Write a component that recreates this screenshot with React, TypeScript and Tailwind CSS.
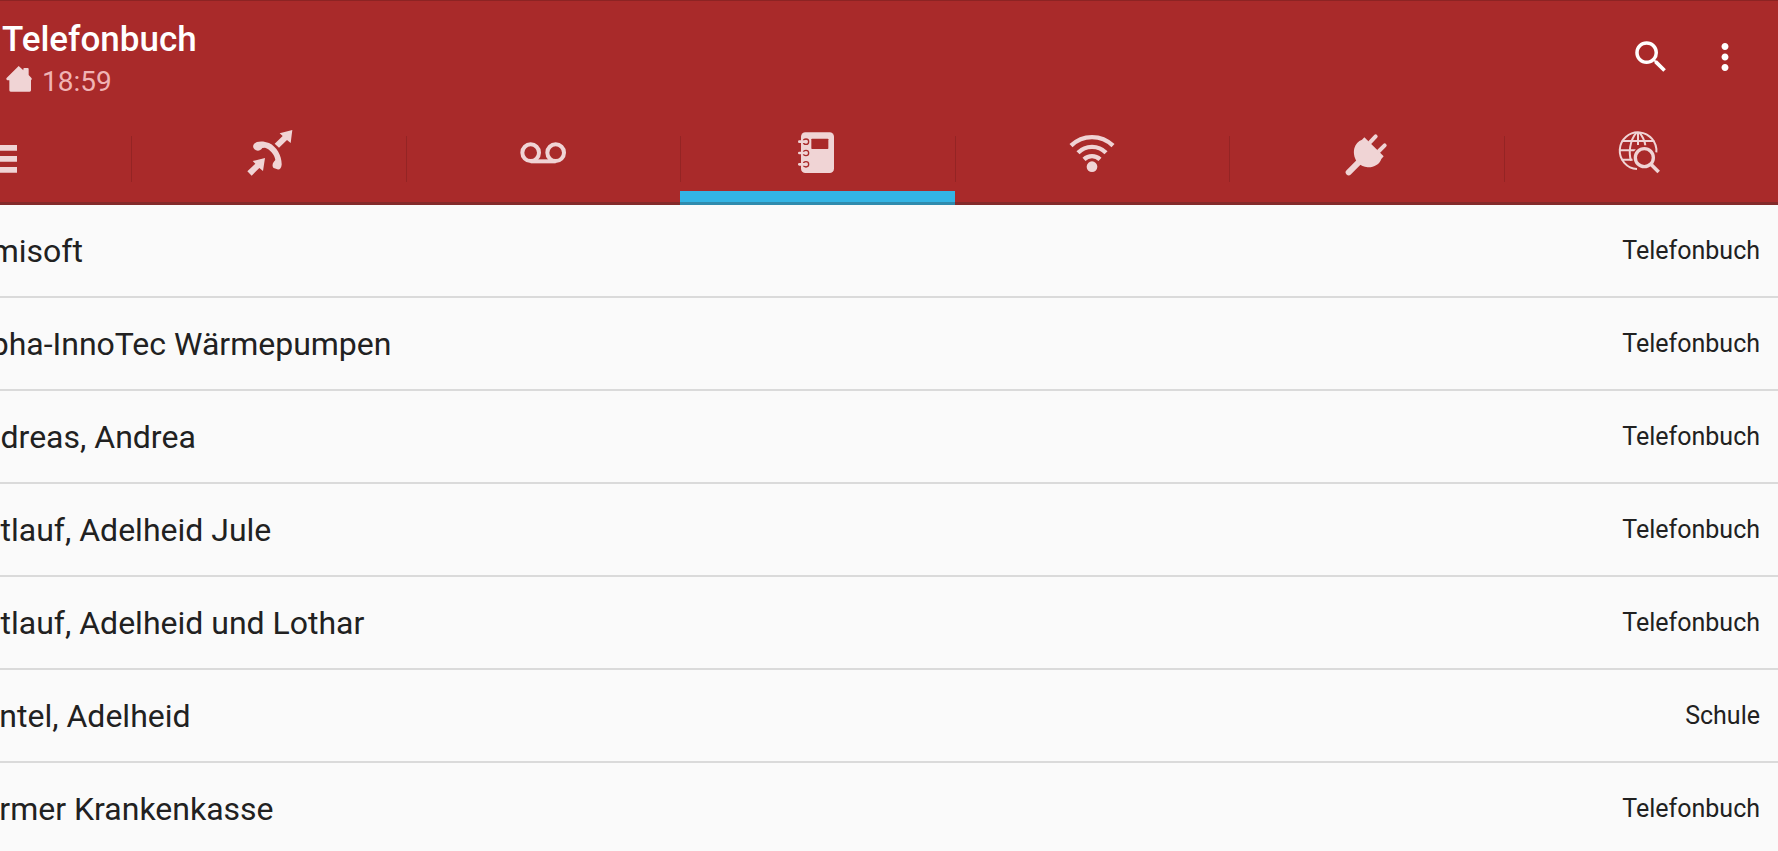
import { useState, type ReactNode } from 'react';
import { MdMoreVert, MdSearch } from 'react-icons/md';

interface Contact {
  name: string;
  source: string;
}

const contacts: Contact[] = [
  { name: 'Almisoft', source: 'Telefonbuch' },
  { name: 'Alpha-InnoTec Wärmepumpen', source: 'Telefonbuch' },
  { name: 'Andreas, Andrea', source: 'Telefonbuch' },
  { name: 'Antlauf, Adelheid Jule', source: 'Telefonbuch' },
  { name: 'Antlauf, Adelheid und Lothar', source: 'Telefonbuch' },
  { name: 'Bantel, Adelheid', source: 'Schule' },
  { name: 'Barmer Krankenkasse', source: 'Telefonbuch' },
];

const RED = '#a92a2a';

function ListIcon() {
  return (
    <svg viewBox="-87 384 144 144" className="size-12" fill="currentColor">
      <path d="M-32 435H54V452H-32ZM-32 468H54V485H-32ZM-32 501H54V518H-32Z" />
    </svg>
  );
}

function CallsIcon() {
  return (
    <svg viewBox="45 39 144 144" className="size-12" fill="currentColor">
      <path d="M187 45L149 55L158 63L134 86L147 98L171 75L182 84Z" />
      <path d="M105 129L68 138L76 146L52 169L65 182L88 159L99 168Z" />
      <path d="M70 91C73 78 98 76 117 84C141 95 156 125 155 149C154 160 148 166 142 163L131 159C126 155 127 146 131 141L136 135C134 118 120 103 105 98L97 99C92 107 84 109 78 106C71 102 68 97 70 91Z" />
    </svg>
  );
}

function VoicemailIcon() {
  return (
    <svg viewBox="57 24 144 144" className="size-12" fill="none" stroke="currentColor" strokeWidth="12">
      <circle cx="92" cy="98" r="25" />
      <circle cx="167" cy="98" r="25" />
      <path d="M92 124H167" />
    </svg>
  );
}

function PhonebookIcon() {
  return (
    <svg viewBox="369 39 144 144" className="size-12" fill="currentColor">
      <rect x="393" y="52" width="99" height="122" rx="13" />
      <rect x="424" y="71" width="51" height="31" rx="2" fill={RED} />
      {[80, 114, 148].map((y) => (
        <g key={y} fill="none" strokeLinecap="round">
          <circle cx="408" cy={y} r="8" stroke={RED} strokeWidth="4" />
          <path d={`M388 ${y}H406`} stroke="currentColor" strokeWidth="8" />
        </g>
      ))}
    </svg>
  );
}

function WifiIcon() {
  return (
    <svg viewBox="51 24 144 144" className="size-12" fill="none" stroke="currentColor" strokeWidth="13">
      <path d="M60 77A90 90 0 0 1 186 77" />
      <path d="M81 98A59 59 0 0 1 165 98" />
      <path d="M99 118A35 35 0 0 1 147 118" />
      <circle cx="123" cy="140" r="16" fill="currentColor" stroke="none" />
    </svg>
  );
}

function PlugIcon() {
  return (
    <svg viewBox="36 24 144 144" className="size-12" fill="currentColor">
      <path d="M103 52L161 109L154 117C149 133 131 143 113 142C102 141 92 136 85 130C74 120 69 100 73 85C76 73 85 63 96 59Z" />
      <g stroke="currentColor" strokeLinecap="round">
        <path d="M88 125L56 157" strokeWidth="18" />
        <path d="M120 67L137 49M147 93L164 76" strokeWidth="12" />
      </g>
    </svg>
  );
}

function WebSearchIcon() {
  return (
    <svg viewBox="51 324 144 144" className="size-12" fill="none" stroke="currentColor" strokeWidth="6">
      <path d="M111 447A55 55 0 1 1 169 397" />
      <path d="M65 363H163M57 391H110M65 419H100M114 336V375" />
      <path d="M110 337C88 362 86 400 93 422M118 337C126 347 134 360 136 376" />
      <circle cx="133" cy="413" r="36" fill={RED} stroke="none" />
      <circle cx="133" cy="413" r="27" strokeWidth="10" />
      <path d="M152 432L176 456" strokeWidth="11" />
    </svg>
  );
}

function HomeIcon() {
  return (
    <svg viewBox="20 197 78 78" className="size-[26px]" fill="currentColor">
      <path d="M58 197L72 210V206Q72 203 75 203H85Q88 203 88 206V224L97 234Q98 239 95 240V270Q95 274 91 274H34Q30 274 30 270V240H24Q20 239 21 234Z" />
    </svg>
  );
}

const tabs: { id: string; label: string; icon: ReactNode }[] = [
  { id: 'list', label: 'Liste', icon: <ListIcon /> },
  { id: 'calls', label: 'Anrufe', icon: <CallsIcon /> },
  { id: 'voicemail', label: 'Anrufbeantworter', icon: <VoicemailIcon /> },
  { id: 'phonebook', label: 'Telefonbuch', icon: <PhonebookIcon /> },
  { id: 'wifi', label: 'WLAN', icon: <WifiIcon /> },
  { id: 'plug', label: 'Smart Home', icon: <PlugIcon /> },
  { id: 'web', label: 'Rückwärtssuche', icon: <WebSearchIcon /> },
];

export default function App() {
  const [active, setActive] = useState('phonebook');

  return (
    <div className="h-screen overflow-hidden bg-[#fafafa] font-[Roboto,sans-serif] text-[#212121]">
      <header className="relative border-t border-[#8c2323] bg-[#a92a2a]">
        <div className="flex h-28 items-center justify-between pr-8">
          <div className="pt-2.5 pl-0.5">
            <h1 className="text-[35px] leading-10 font-medium text-white">Telefonbuch</h1>
            <p className="flex h-11 items-center gap-2.5 pl-1 text-[28px] text-[#f0b4b4]">
              <span className="pb-1.5 text-[#f0d4d5]">
                <HomeIcon />
              </span>
              18:59
            </p>
          </div>
          <div className="flex gap-8 text-white">
            <button aria-label="Suchen">
              <MdSearch size={42} />
            </button>
            <button aria-label="Mehr">
              <MdMoreVert size={42} />
            </button>
          </div>
        </div>

        {/* Tab strip, the first tab is scrolled half out on the left */}
        <nav className="-ml-[143px] flex h-[92px] items-center">
          {tabs.map((tab, i) => (
            <div key={tab.id} className="flex h-full flex-1 items-center">
              {i > 0 && <span className="-mr-px h-[46px] w-px bg-[#942424]" />}
              <button
                aria-label={tab.label}
                onClick={() => setActive(tab.id)}
                className={`flex h-full flex-1 items-center justify-center border-b-14 text-[#f0d4d5] ${
                  active === tab.id ? 'border-[#33b5e5]' : 'border-transparent'
                }`}
              >
                {tab.icon}
              </button>
            </div>
          ))}
        </nav>
        <div className="pointer-events-none absolute inset-x-0 bottom-0 h-[3px] bg-[#2b2b2b]/30" />
      </header>

      <ul className="-ml-[38px]">
        {contacts.map((contact) => (
          <li
            key={contact.name}
            className="flex h-[93px] items-center justify-between border-b-2 border-[#dadada] pt-px pr-[18px]"
          >
            <span className="text-[32px]">{contact.name}</span>
            <span className="text-[25px]">{contact.source}</span>
          </li>
        ))}
      </ul>
    </div>
  );
}
